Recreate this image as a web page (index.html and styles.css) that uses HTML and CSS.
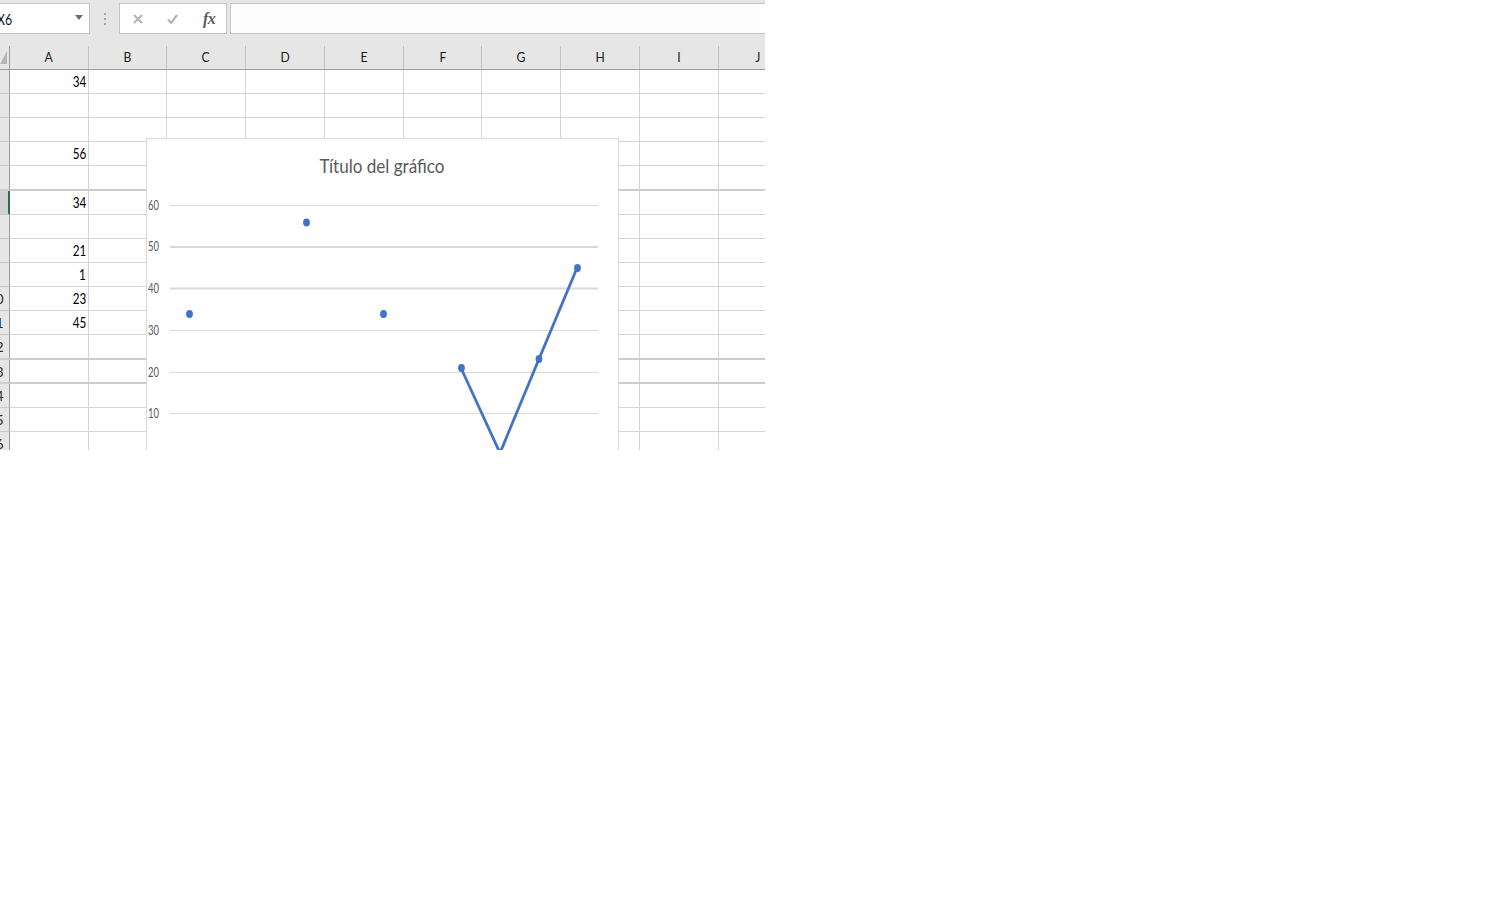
FILE: index.html
```html
<!DOCTYPE html>
<html lang="es">
<head>
<meta charset="utf-8">
<title>Hoja de cálculo</title>
<link rel="stylesheet" href="styles.css">
</head>
<body>
<div class="sheet">
  <div class="fbar">
    <div class="namebox">
      <span class="nb-text">X6</span>
      <svg class="nb-arrow" width="8" height="5" viewBox="0 0 8 5"><path d="M0 0H8L4 5Z" fill="#6b6b6b"/></svg>
    </div>
    <div class="sep"><i></i><i></i><i></i></div>
    <div class="fnbox">
      <svg class="ic-x" width="10" height="10" viewBox="0 0 10 10"><path d="M1 1L9 9M9 1L1 9" stroke="#b3b3b3" stroke-width="2" fill="none"/></svg>
      <svg class="ic-ok" width="11" height="10" viewBox="0 0 11 10"><path d="M1 5.5L4.2 9L10 1" stroke="#b3b3b3" stroke-width="2.2" fill="none"/></svg>
      <span class="fx">fx</span>
    </div>
    <div class="formula"></div>
  </div>

  <div class="grid">
    <div class="row head">
      <div class="rh corner"><svg width="7" height="13" viewBox="0 0 7 13"><path d="M7 0V13H0Z" fill="#b5b5b5"/></svg></div>
      <div class="ch wa"><span class="lt">A</span></div>
      <div class="ch wb"><span class="lt">B</span></div>
      <div class="ch wa"><span class="lt">C</span></div>
      <div class="ch wa"><span class="lt">D</span></div>
      <div class="ch wa"><span class="lt">E</span></div>
      <div class="ch wb"><span class="lt">F</span></div>
      <div class="ch wa"><span class="lt">G</span></div>
      <div class="ch wa"><span class="lt">H</span></div>
      <div class="ch wa"><span class="lt">I</span></div>
      <div class="ch wa"><span class="lt">J</span></div>
    </div>

    <div class="row"><div class="rh">1</div><div class="c wa"><span class="num">34</span></div><div class="c wb"></div><div class="c wa"></div><div class="c wa"></div><div class="c wa"></div><div class="c wb"></div><div class="c wa"></div><div class="c wa"></div><div class="c wa"></div><div class="c wa"></div></div>
    <div class="row"><div class="rh">2</div><div class="c wa"></div><div class="c wb"></div><div class="c wa"></div><div class="c wa"></div><div class="c wa"></div><div class="c wb"></div><div class="c wa"></div><div class="c wa"></div><div class="c wa"></div><div class="c wa"></div></div>
    <div class="row"><div class="rh">3</div><div class="c wa"></div><div class="c wb"></div><div class="c wa"></div><div class="c wa"></div><div class="c wa"></div><div class="c wb"></div><div class="c wa"></div><div class="c wa"></div><div class="c wa"></div><div class="c wa"></div></div>
    <div class="row"><div class="rh">4</div><div class="c wa"><span class="num">56</span></div><div class="c wb"></div><div class="c wa"></div><div class="c wa"></div><div class="c wa"></div><div class="c wb"></div><div class="c wa"></div><div class="c wa"></div><div class="c wa"></div><div class="c wa"></div></div>
    <div class="row tall thick"><div class="rh">5</div><div class="c wa"></div><div class="c wb"></div><div class="c wa"></div><div class="c wa"></div><div class="c wa"></div><div class="c wb"></div><div class="c wa"></div><div class="c wa"></div><div class="c wa"></div><div class="c wa"></div></div>
    <div class="row"><div class="rh sel">6</div><div class="c wa"><span class="num">34</span></div><div class="c wb"></div><div class="c wa"></div><div class="c wa"></div><div class="c wa"></div><div class="c wb"></div><div class="c wa"></div><div class="c wa"></div><div class="c wa"></div><div class="c wa"></div></div>
    <div class="row"><div class="rh">7</div><div class="c wa"></div><div class="c wb"></div><div class="c wa"></div><div class="c wa"></div><div class="c wa"></div><div class="c wb"></div><div class="c wa"></div><div class="c wa"></div><div class="c wa"></div><div class="c wa"></div></div>
    <div class="row"><div class="rh">8</div><div class="c wa"><span class="num">21</span></div><div class="c wb"></div><div class="c wa"></div><div class="c wa"></div><div class="c wa"></div><div class="c wb"></div><div class="c wa"></div><div class="c wa"></div><div class="c wa"></div><div class="c wa"></div></div>
    <div class="row"><div class="rh">9</div><div class="c wa"><span class="num">1</span></div><div class="c wb"></div><div class="c wa"></div><div class="c wa"></div><div class="c wa"></div><div class="c wb"></div><div class="c wa"></div><div class="c wa"></div><div class="c wa"></div><div class="c wa"></div></div>
    <div class="row"><div class="rh">10</div><div class="c wa"><span class="num">23</span></div><div class="c wb"></div><div class="c wa"></div><div class="c wa"></div><div class="c wa"></div><div class="c wb"></div><div class="c wa"></div><div class="c wa"></div><div class="c wa"></div><div class="c wa"></div></div>
    <div class="row"><div class="rh">11</div><div class="c wa"><span class="num">45</span></div><div class="c wb"></div><div class="c wa"></div><div class="c wa"></div><div class="c wa"></div><div class="c wb"></div><div class="c wa"></div><div class="c wa"></div><div class="c wa"></div><div class="c wa"></div></div>
    <div class="row tall thick"><div class="rh">12</div><div class="c wa"></div><div class="c wb"></div><div class="c wa"></div><div class="c wa"></div><div class="c wa"></div><div class="c wb"></div><div class="c wa"></div><div class="c wa"></div><div class="c wa"></div><div class="c wa"></div></div>
    <div class="row thick"><div class="rh">13</div><div class="c wa"></div><div class="c wb"></div><div class="c wa"></div><div class="c wa"></div><div class="c wa"></div><div class="c wb"></div><div class="c wa"></div><div class="c wa"></div><div class="c wa"></div><div class="c wa"></div></div>
    <div class="row"><div class="rh">14</div><div class="c wa"></div><div class="c wb"></div><div class="c wa"></div><div class="c wa"></div><div class="c wa"></div><div class="c wb"></div><div class="c wa"></div><div class="c wa"></div><div class="c wa"></div><div class="c wa"></div></div>
    <div class="row"><div class="rh">15</div><div class="c wa"></div><div class="c wb"></div><div class="c wa"></div><div class="c wa"></div><div class="c wa"></div><div class="c wb"></div><div class="c wa"></div><div class="c wa"></div><div class="c wa"></div><div class="c wa"></div></div>
    <div class="row"><div class="rh">16</div><div class="c wa"></div><div class="c wb"></div><div class="c wa"></div><div class="c wa"></div><div class="c wa"></div><div class="c wb"></div><div class="c wa"></div><div class="c wa"></div><div class="c wa"></div><div class="c wa"></div></div>
  </div>

  <div class="chart">
    <svg class="plot" width="471" height="400" viewBox="147 139 471 400">
      <g class="grid-lines" stroke="#d9d9d9" fill="none">
        <line x1="170" x2="598" y1="205.5" y2="205.5" stroke-width="1"/>
        <line x1="170" x2="598" y1="247" y2="247" stroke-width="2"/>
        <line x1="170" x2="598" y1="288.5" y2="288.5" stroke-width="2"/>
        <line x1="170" x2="598" y1="330.5" y2="330.5" stroke-width="1"/>
        <line x1="170" x2="598" y1="372.5" y2="372.5" stroke-width="1"/>
        <line x1="170" x2="598" y1="413.5" y2="413.5" stroke-width="1"/>
      </g>
      <g class="axis-labels">
        <text x="159" y="209.5" text-anchor="end" textLength="11" lengthAdjust="spacingAndGlyphs">60</text>
        <text x="159" y="251" text-anchor="end" textLength="11" lengthAdjust="spacingAndGlyphs">50</text>
        <text x="159" y="292.5" text-anchor="end" textLength="11" lengthAdjust="spacingAndGlyphs">40</text>
        <text x="159" y="334.5" text-anchor="end" textLength="11" lengthAdjust="spacingAndGlyphs">30</text>
        <text x="159" y="376.5" text-anchor="end" textLength="11" lengthAdjust="spacingAndGlyphs">20</text>
        <text x="159" y="417.5" text-anchor="end" textLength="11" lengthAdjust="spacingAndGlyphs">10</text>
      </g>
      <text class="chart-title" x="382" y="172.5" text-anchor="middle" textLength="125" lengthAdjust="spacingAndGlyphs">Título del gráfico</text>
      <polyline points="461,368 500,453 539,359 577,268" fill="none" stroke="#4472c4" stroke-width="2.8" stroke-linejoin="round" stroke-linecap="round"/>
      <g fill="#4472c4">
        <ellipse cx="189.5" cy="314" rx="3.4" ry="4"/>
        <ellipse cx="306.5" cy="222.5" rx="3.4" ry="4"/>
        <ellipse cx="383.5" cy="314" rx="3.4" ry="4"/>
        <ellipse cx="461.5" cy="368" rx="3.4" ry="4"/>
        <ellipse cx="500" cy="453" rx="3.4" ry="4"/>
        <ellipse cx="539" cy="359" rx="3.4" ry="4"/>
        <ellipse cx="577.5" cy="268" rx="3.4" ry="4"/>
      </g>
    </svg>
  </div>
</div>
</body>
</html>
```
FILE: styles.css
```css
html, body {
  margin: 0;
  padding: 0;
  background: #ffffff;
}

body {
  font-family: Lato, "Liberation Sans", sans-serif;
  color: #1a1a1a;
}

.sheet {
  position: relative;
  width: 765px;
  height: 450px;
  overflow: hidden;
  background: #ffffff;
}

/* ---------- formula bar ---------- */
.fbar {
  box-sizing: border-box;
  height: 46px;
  padding-top: 3px;
  background: #e6e6e6;
  display: flex;
  align-items: flex-start;
}

.namebox {
  box-sizing: border-box;
  margin-left: -8px;
  width: 98px;
  height: 31px;
  border: 1px solid #c6c6c6;
  background: #ffffff;
  display: flex;
  align-items: center;
  justify-content: space-between;
  padding: 0 6px 0 4px;
}

.nb-text {
  display: inline-block;
  font-size: 15px;
  color: #111111;
  transform: scaleX(0.82);
  transform-origin: left center;
}

.nb-arrow {
  display: block;
  margin-top: -2px;
}

.sep {
  width: 29px;
  height: 31px;
  display: flex;
  flex-direction: column;
  align-items: center;
  justify-content: center;
  gap: 3px;
}

.sep i {
  display: block;
  width: 2px;
  height: 2px;
  background: #a8a8a8;
}

.fnbox {
  box-sizing: border-box;
  width: 108px;
  height: 31px;
  border: 1px solid #c6c6c6;
  background: #ffffff;
  display: flex;
  align-items: center;
}

.ic-x {
  display: block;
  margin-left: 13px;
}

.ic-ok {
  display: block;
  margin-left: 24px;
}

.fx {
  margin-left: 25px;
  font-family: "Liberation Serif", serif;
  font-style: italic;
  font-weight: bold;
  font-size: 16px;
  color: #5c5c5c;
  letter-spacing: -0.5px;
}

.formula {
  box-sizing: border-box;
  flex: 1;
  margin-left: 3px;
  margin-right: -10px;
  height: 31px;
  border: 1px solid #c6c6c6;
  background: #fdfdfd;
}

/* ---------- grid ---------- */
.grid {
  margin-left: -18px;
}

.row {
  display: flex;
  height: 24px;
}

.row.tall {
  height: 25px;
}

.row > div {
  box-sizing: border-box;
  flex: none;
  height: 100%;
}

.rh {
  width: 28px;
  background: #e6e6e6;
  border-right: 1px solid #9b9b9b;
  border-bottom: 1px solid #c9c9c9;
  font-size: 14px;
  line-height: 23px;
  text-align: center;
  color: #2b2b2b;
}

.rh.sel {
  background: #d2d2d2;
  border-right-color: #217346;
  box-shadow: inset -1px 0 0 #217346;
}

.rh.corner {
  display: flex;
  align-items: flex-start;
  justify-content: flex-end;
  padding: 5px 2px 0 0;
  border-bottom-color: #9b9b9b;
}

.rh.corner svg {
  display: block;
}

.wa { width: 79px; }
.wb { width: 78px; }

.ch {
  background: #e6e6e6;
  border-right: 1px solid #c4c4c4;
  border-bottom: 1px solid #9b9b9b;
  text-align: center;
  font-size: 13.5px;
  line-height: 23px;
  color: #1a1a1a;
}

.lt {
  display: inline-block;
  transform: scaleX(0.9);
}

.c {
  border-right: 1px solid #d4d4d4;
  border-bottom: 1px solid #d4d4d4;
  display: flex;
  justify-content: flex-end;
  padding-right: 2px;
  font-size: 15px;
  line-height: 23px;
  color: #000000;
}

.row.thick > .c,
.row.thick > .rh {
  border-bottom: 2px solid #cdcdcd;
}

.num {
  display: inline-block;
  transform: scaleX(0.78);
  transform-origin: right center;
}

/* ---------- chart ---------- */
.chart {
  position: absolute;
  left: 146px;
  top: 138px;
  width: 473px;
  height: 402px;
  box-sizing: border-box;
  border: 1px solid #d9d9d9;
  background: #ffffff;
}

.plot {
  display: block;
}

.axis-labels text {
  font-family: Lato, "Liberation Sans", sans-serif;
  font-size: 13px;
  fill: #595959;
}

.chart-title {
  font-family: Lato, "Liberation Sans", sans-serif;
  font-size: 20px;
  fill: #595959;
}
```
